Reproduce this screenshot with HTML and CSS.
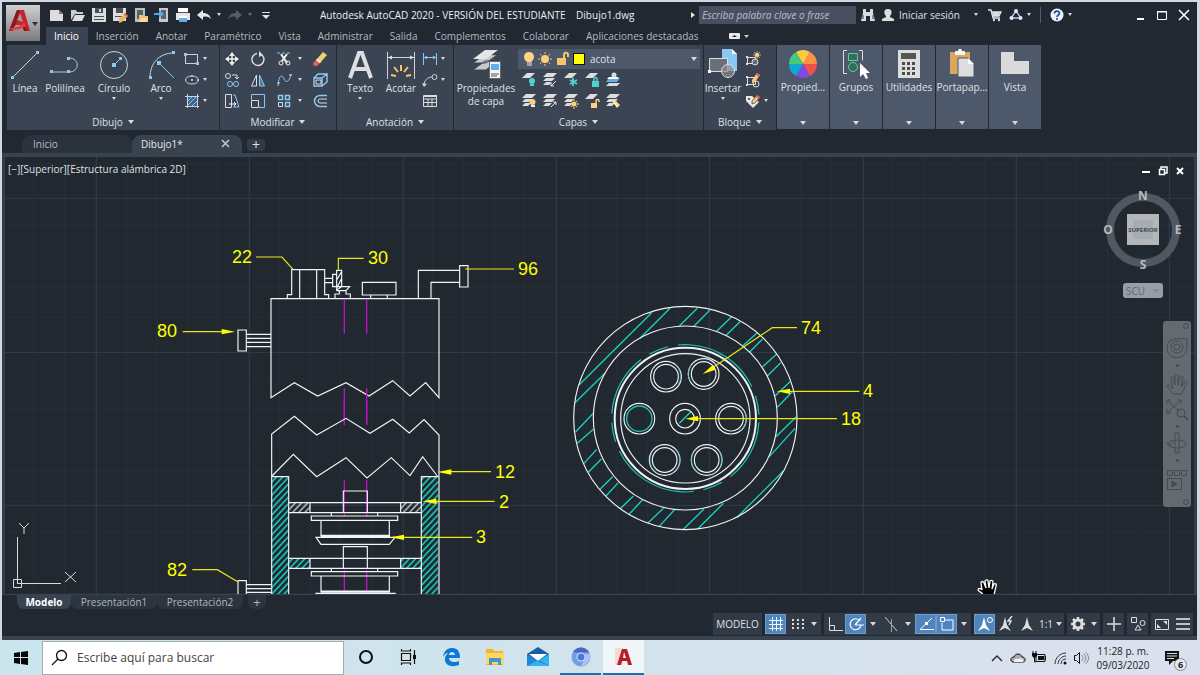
FILE: index.html
```html
<!DOCTYPE html>
<html lang="es">
<head>
<meta charset="utf-8">
<title>Autodesk AutoCAD 2020 - Dibujo1.dwg</title>
<link rel="stylesheet" href="styles.css">
</head>
<body>
<main class="app">
  <header class="top">
    <button class="logo" aria-label="Menú de la aplicación">
      <svg width="34" height="35" viewBox="0 0 34 35"><path d="M3 25 11 4h7l6 21h-6l-2-6H9l-2 6z" fill="#c8232b"/><path d="M11 14l3-7 3 9z" fill="#9b9da0"/><path d="M3 25 11 4l3 1-5 15zM16 19l4 3 1 3h-3z" fill="#8e151c"/><path d="M3 22c7 0 12-2 15-6l2 4c-5 3-9 4-14 4z" fill="#e33a40"/><path d="M26 16h6l-3 4z" fill="#333"/></svg>
    </button>
    <div class="bars">
      <div class="titlebar">
        <div class="quick">
          <button aria-label="Nuevo"><svg width="16" height="16"><path d="M1 3h9l4 4v7H1z" fill="#ddd"/><path d="M10 3v4h4z" fill="#777"/></svg></button>
          <button aria-label="Abrir"><svg width="16" height="16"><path d="M1 13V3h5l1 2h6v2H5z" fill="#ccc"/><path d="M5 8h10l-3 6H2z" fill="#ddd"/></svg></button>
          <button aria-label="Guardar"><svg width="16" height="16"><path d="M1 1h14v14H1z" fill="#ddd"/><path d="M4 1h8v5H4zM3 9h10v1H3zm0 3h10v1H3z" fill="#4a5059"/><path d="M8 2h2v3H8z" fill="#ddd"/></svg></button>
          <button aria-label="Guardar como"><svg width="16" height="16"><path d="M1 1h13v13H1z" fill="#ddd"/><path d="M4 1h7v5H4zM3 9h9v1H3z" fill="#4a5059"/><path d="m7 12 6-6 3 3-6 6-3 1z" fill="#f0b45c"/><path d="m12 7 1-1 3 3-1 1z" fill="#e2574c"/></svg></button>
          <button aria-label="Abrir desde la web"><svg width="16" height="16"><path d="M2 1h10v14H2z" fill="#b9bcc0"/><path d="M4 3h6v9H4z" fill="#5a6069"/><path d="M6 8h4l1 1h4v6H6z" fill="#edc36f"/><path d="M8 11h7l-2 4H6z" fill="#f8dc9a"/></svg></button>
          <button aria-label="Guardar en la web"><svg width="16" height="16"><path d="M5 1h9v14H5z" fill="#c6c9cd"/><path d="M7 3h5v9H7z" fill="#59606a"/><path d="M0 6h5V3l5 4-5 4V8H0z" fill="#56a8e8"/></svg></button>
          <button aria-label="Imprimir"><svg width="16" height="16"><path d="M3 1h10v4H3z" fill="#fff"/><path d="M1 6h14v7H1z" fill="#e4e4e4"/><path d="M3 5h10v1H3z" fill="#555"/><path d="M4 9h8v6H4z" fill="#5fb0ec"/><path d="M4 9h8v2H4z" fill="#fff"/></svg></button>
          <button aria-label="Deshacer"><svg width="16" height="16"><path d="M1 8l6-5v3c4 0 7 2 8 6-2-2-4-3-8-2v3z" fill="#e8e8e8"/></svg></button>
          <i class="caret"></i>
          <button aria-label="Rehacer"><svg width="16" height="16"><path d="M15 8 9 3v3C5 6 2 8 1 12c2-2 4-3 8-2v3z" fill="#565d68"/></svg></button>
          <i class="caret dim"></i>
          <button aria-label="Personalizar"><svg width="16" height="16"><path d="M4 5h8v1H4zm0 3h8l-4 4z" fill="#e0e0e0"/></svg></button>
        </div>
        <h1>Autodesk AutoCAD 2020 - VERSIÓN DEL ESTUDIANTE <span>Dibujo1.dwg</span></h1>
        <i class="expand"></i>
        <input class="help-search" type="search" aria-label="Buscar ayuda" placeholder="Escriba palabra clave o frase">
        <div class="account">
          <button aria-label="Buscar"><svg width="14" height="14"><path d="M2 1h3v3h4V1h3v4l2 8H9V8H5v5H0l2-8z" fill="#ddd"/><path d="M2 7v4M12 7v4" stroke="#333b47"/></svg></button>
          <button class="signin"><svg width="14" height="14"><path d="M7 1c5 0 4 5 2 7v1l4 2v2H1v-2l4-2V8C3 6 2 1 7 1z" fill="#ddd"/></svg><span>Iniciar sesión</span></button>
          <i class="caret"></i>
          <button aria-label="Tienda"><svg width="14" height="14"><path d="M0 2h3l2 8h7M3 4h10l-2 4H5" fill="none" stroke="#e4e4e4" stroke-width="1.3"/><path d="M4 4h8l-1 4H5z" fill="#ddd"/><circle cx="6" cy="12" r="1.2" fill="#ddd"/><circle cx="11" cy="12" r="1.2" fill="#ddd"/></svg></button>
          <button aria-label="Compartir"><svg width="14" height="14"><path d="M7 3 2 10h10z" fill="none" stroke="#b6c7e8" stroke-width="1.4"/><circle cx="7" cy="3" r="2" fill="#dfe8fa"/><circle cx="2.500" cy="10" r="2" fill="#dfe8fa"/><circle cx="11.500" cy="10" r="2" fill="#dfe8fa"/></svg></button>
          <i class="caret"></i>
          <span class="rule"></span>
          <button aria-label="Ayuda"><svg width="14" height="14"><circle cx="7" cy="7" r="6.500" fill="#eef3fb"/><path d="M4.500 5.500C4.500 2.500 9.500 2.500 9.500 5.200 9.500 7 7 7 7 9M7 10v2" fill="none" stroke="#2451a0" stroke-width="1.700"/></svg></button>
          <i class="caret"></i>
        </div>
        <div class="window-buttons">
          <button aria-label="Minimizar"><svg width="14" height="14"><path d="M4 11h7" stroke="#fff" stroke-width="2"/></svg></button>
          <button aria-label="Maximizar"><svg width="14" height="14"><path d="M2.500 3.500h9v8h-9zM2 4h10" fill="none" stroke="#fff"/></svg></button>
          <button aria-label="Cerrar"><svg width="14" height="14"><path d="m2 2 10 10M12 2 2 12" stroke="#fff" stroke-width="1.500"/></svg></button>
        </div>
      </div>
      <nav class="ribbon-tabs">
        <button class="on">Inicio</button><button>Inserción</button><button>Anotar</button><button>Paramétrico</button><button>Vista</button><button>Administrar</button><button>Salida</button><button>Complementos</button><button>Colaborar</button><button>Aplicaciones destacadas</button>
        <button class="collapse" aria-label="Minimizar la cinta"><svg width="22" height="10"><rect x="1" y="2" width="11" height="6" rx="1" fill="#e8e8e8"/><path d="m4 6 2.500-2L9 6z" fill="#222"/><path d="M16 4h5l-2.500 3z" fill="#ccc"/></svg></button>
      </nav>
    </div>
  </header>

  <section class="ribbon">
    <div class="panel draw">
      <div class="tools">
        <button class="big w36"><svg width="32" height="32"><path d="M3 29 29 3" stroke="#ccd3dc"/><path d="M2 27h3v3H2zM27 2h3v3h-3z" fill="#8cc8f4"/></svg>Línea</button>
        <button class="big w44"><svg width="32" height="32"><path d="M2 23h18c11 0 11-14 0-14" fill="none" stroke="#b8c4d2"/><path d="M1 21h3v3H1zM18 21h3v3h-3zM18 8h3v3h-3z" fill="#8cc8f4"/></svg>Polilínea</button>
        <button class="big w54"><svg width="32" height="32"><circle cx="16" cy="16" r="13.500" fill="none" stroke="#ccd3dc"/><path d="m16 16 6-6" stroke="#8cc8f4"/><path d="M14 14h4v4h-4zM21 8h3v3h-3z" fill="#8cc8f4"/></svg>Círculo<i class="caret"></i></button>
        <button class="big w40"><svg width="32" height="32"><path d="M5 29C5 14 14 4 29 4" fill="none" stroke="#ccd3dc"/><path d="M13 13 29 29" stroke="#8cc8f4"/><path d="M4 27h3v3H4zM27 2h3v3h-3zM12 12h4v4h-4z" fill="#8cc8f4"/></svg>Arco<i class="caret"></i></button>
        <div class="small two">
          <button aria-label="Rectángulo"><svg width="16" height="16"><path d="M1.500 3.500h12v9h-12z" fill="none" stroke="#ccd3dc"/><path d="M0 2h3v3H0zM12 11h3v3h-3z" fill="#8cc8f4"/></svg></button><i class="caret"></i>
          <button aria-label="Elipse"><svg width="16" height="16"><ellipse cx="8" cy="8" rx="6.500" ry="4" fill="none" stroke="#ccd3dc"/><path d="M7 7h2v2H7zM7 3h2v2H7zM13 7h2v2h-2z" fill="#8cc8f4"/></svg></button><i class="caret"></i>
          <button aria-label="Sombreado"><svg width="16" height="16"><path d="M4 4h9v9H4z" fill="#3d6487"/><path d="m4 8 4-4M4 12l8-8M8 13l5-5" stroke="#8cc8f4"/><path d="M1 3.500h14M1 13.500h14M3.500 1v14M13.500 1v14" stroke="#ccd3dc"/></svg></button><i class="caret"></i>
        </div>
      </div>
      <button class="caption">Dibujo <i class="caret wide"></i></button>
    </div>

    <div class="panel modify">
      <div class="tools">
        <div class="small five">
          <button aria-label="Desplazar"><svg width="16" height="16"><path d="M8 2v12M2 8h12" stroke="#eee" stroke-width="1.500"/><path d="m8 1 3 4H5zM8 15l3-4H5zM1 8l4-3v6zM15 8l-4-3v6z" fill="#eee"/></svg></button>
          <button aria-label="Girar"><svg width="16" height="16"><path d="M12 4a6 6 0 1 1-5-1.500" fill="none" stroke="#e0e0e0" stroke-width="1.400"/><path d="M9 0v6L13 4z" fill="#e0e0e0"/></svg></button>
          <button aria-label="Recortar"><svg width="16" height="16"><path d="M1 2h3M6 2h3M11 2h3" stroke="#8cc8f4"/><path d="m5 3 6 9M11 3 6 10" stroke="#eee" stroke-width="2"/><circle cx="5" cy="12" r="2" fill="none" stroke="#eee"/><circle cx="12" cy="12" r="2" fill="none" stroke="#eee"/></svg></button><i class="caret"></i>
          <button aria-label="Borrar"><svg width="16" height="16"><path d="m4 9 7-8 4 3-7 8z" fill="#f2cf75"/><path d="m1 12 3-3 4 3-3 3H2z" fill="#e85f58"/><path d="m4 9 1-1 4 3-1 1z" fill="#fff"/></svg></button>
          <button aria-label="Copiar"><svg width="16" height="16"><circle cx="4" cy="4" r="2.500" fill="none" stroke="#ddd"/><path d="M8 3h5v4M11 5l2 2 2-2" fill="none" stroke="#ddd"/><circle cx="6" cy="12" r="2.500" fill="none" stroke="#8cc8f4"/><circle cx="12" cy="12" r="2.500" fill="none" stroke="#8cc8f4"/></svg></button>
          <button aria-label="Simetría"><svg width="16" height="16"><path d="M6.500 3v11H1.500z" fill="none" stroke="#ddd"/><path d="M9.500 3v11h5z" fill="#4c789e" stroke="#8cc8f4"/></svg></button>
          <button aria-label="Empalme"><svg width="16" height="16"><path d="M2 14C3 0 7 4 8 7s5 5 7-5" fill="none" stroke="#8cc8f4"/><path d="M1 11h3M13 3h3" stroke="#ddd"/></svg></button><i class="caret"></i>
          <button aria-label="Descomponer"><svg width="16" height="16"><path d="M2 6h8v8H2zM2 6l4-4h9l-5 4M15 2v8l-5 4" fill="none" stroke="#8cc8f4" stroke-width="1.400"/><path d="M4 8h5v4H4z" fill="none" stroke="#ddd"/></svg></button>
          <button aria-label="Estirar"><svg width="16" height="16"><path d="M1.500 1.500h6v13h-6z" fill="none" stroke="#ddd"/><path d="M9 2h2l4 12H9" fill="none" stroke="#8cc8f4"/><path d="M5 11h7M10 9l2 2-2 2" fill="none" stroke="#fff"/></svg></button>
          <button aria-label="Escala"><svg width="16" height="16"><path d="M1.500 7V1.500h13v13H9" fill="none" stroke="#8cc8f4"/><path d="M1.500 7.500h7v7h-7z" fill="none" stroke="#ddd"/></svg></button>
          <button aria-label="Matriz"><svg width="16" height="16"><path d="M2.500 9.500h4v4h-4z" fill="none" stroke="#ddd"/><path d="M2.500 2.500h4v4h-4zM9.500 2.500h4v4h-4zM9.500 9.500h4v4h-4z" fill="none" stroke="#8cc8f4" stroke-width="1.500"/></svg></button><i class="caret"></i>
          <button aria-label="Desfase"><svg width="16" height="16"><path d="M15 2.500H8a5.500 5.500 0 0 0 0 11h7" fill="none" stroke="#8cc8f4" stroke-width="1.500"/><path d="M15 6H8a2 2 0 0 0 0 4h7" fill="none" stroke="#ddd"/></svg></button>
        </div>
      </div>
      <button class="caption">Modificar <i class="caret wide"></i></button>
    </div>

    <div class="panel annotate">
      <div class="tools">
        <button class="big w46"><svg width="32" height="32"><path d="M6 29 15 4h3l9 25M9 20h14" fill="none" stroke="#dedede" stroke-width="4"/></svg>Texto<i class="caret"></i></button>
        <button class="big w36"><svg width="32" height="32"><path d="M2.500 3v27M29.500 3v27" stroke="#ccd3dc"/><path d="M3 8.500h26" stroke="#ccd3dc"/><path d="m3 8.500 4-2v4zM29 8.500l-4-2v4z" fill="#ddd"/><path d="M16 16v6M9 18l4 5M23 18l-4 5M6 26l5 1M26 26l-5 1" stroke="#f5c56a" stroke-width="2"/></svg>Acotar</button>
        <div class="small two">
          <button aria-label="Cota lineal"><svg width="16" height="16"><path d="M1.500 2v12M14.500 2v12M2 6.500h12" stroke="#8cc8f4"/><path d="m2 6.500 3-2v4zM14 6.500l-3-2v4z" fill="#8cc8f4"/></svg></button><i class="caret"></i>
          <button aria-label="Directriz"><svg width="16" height="16"><path d="M2 14C2 8 6 5 10 5" fill="none" stroke="#ccd3dc"/><circle cx="12.500" cy="5" r="2.500" fill="none" stroke="#ccd3dc"/><path d="m0 11 2 4 3-3z" fill="#ccd3dc"/></svg></button><i class="caret"></i>
          <button aria-label="Tabla"><svg width="16" height="16"><path d="M1.500 2.500h13v11h-13zM1 6h14M1 9.500h14M6 6v8M10 6v8" fill="none" stroke="#ddd"/><path d="M2 2h13v2H2z" fill="#ddd"/></svg></button>
        </div>
      </div>
      <button class="caption">Anotación <i class="caret wide"></i></button>
    </div>

    <div class="panel layers">
      <div class="tools">
        <button class="big w64"><svg width="32" height="32"><path d="m3 21 12-9h12L16 21zM3 14l12-9 12 1-11 8z" fill="#c9c9c9" stroke="#3b4453"/><path d="m3 10 12-9h13L16 10z" fill="#e6e6e6"/><path d="M19.500 12.500h11v17h-11z" fill="#f4f4f4" stroke="#666"/><path d="M21 15h8v6h-8z" fill="#5fb0ec"/><path d="M21 25h8M21 27h6" stroke="#555"/></svg>Propiedades<br>de capa</button>
        <div class="layer-side">
          <div class="layer-box">
            <svg width="52" height="16"><path d="M10 11H6C0 6 4 1 8 1s8 5 2 10z" fill="#ffd582"/><path d="M6 12h5M6 14h5" stroke="#eee"/><circle cx="24" cy="8" r="4" fill="#ffd07a"/><path d="M24 1v2M24 13v2M17 8h2M29 8h2M19 3l1.500 1.500M27.500 11.500 29 13M19 13l1.500-1.500M27.500 4.500 29 3" stroke="#f3c474"/><path d="M36 7h9v7h-9z" fill="#f5c56a"/><path d="M43 7V4c0-3 4-3 4 0v2" fill="none" stroke="#f5c56a" stroke-width="2"/></svg>
            <span class="swatch"></span>
            <select aria-label="Capa"><option>acota</option></select><i class="caret wide"></i>
          </div>
          <div class="layer-tools">
            <button aria-label="Desactivar"><svg width="16" height="16"><path d="m1 6 5-5h8L9 6z" fill="#ddd"/><circle cx="11" cy="9" r="3" fill="#56cfd0"/><path d="M9 12h4v2H9z" fill="#56cfd0"/></svg></button>
            <button aria-label="Aislar"><svg width="16" height="16"><path d="m1 5 4-4h10l-4 4zM1 9l3-3h9l-3 3zM1 13l3-3h6l-3 3z" fill="#ddd"/><path d="m9 14 5-5M9 11v3h3" fill="none" stroke="#e5e5e5"/></svg></button>
            <button aria-label="Inutilizar"><svg width="16" height="16"><path d="m1 6 5-5h8L9 6z" fill="#ddd"/><path d="M10 6v8M7 8l7 4M14 8l-7 4" stroke="#56cfd0" stroke-width="1.800"/></svg></button>
            <button aria-label="Bloquear"><svg width="16" height="16"><path d="m1 6 5-5h8L9 6z" fill="#ddd"/><path d="M8 9h7v6H8z" fill="#56cfd0"/><path d="M10 9V7c0-2 3-2 3 0v2" fill="none" stroke="#56cfd0" stroke-width="1.500"/></svg></button>
            <button aria-label="Definir actual"><svg width="16" height="16"><path d="m1 14 3-3h11l-3 3z" fill="#ddd"/><path d="m1 10 3-4h11l-3 4z" fill="#62b0ea"/><path d="M4 5h10l-2 2H2z" fill="#fff"/><circle cx="9" cy="3" r="2.500" fill="#ddd"/></svg></button>
            <button aria-label="Activar"><svg width="16" height="16"><path d="m1 5 4-4h10l-4 4zM1 9l3-3h7l-3 3zM1 13l3-3h6l-3 3z" fill="#ddd"/><circle cx="11.500" cy="9" r="3" fill="#ffd07a"/><path d="M10 12h4v2h-4z" fill="#eee"/></svg></button>
            <button aria-label="Dejar de aislar"><svg width="16" height="16"><path d="m1 5 4-4h10l-4 4zM1 9l3-3h9l-3 3zM1 13l3-3h6l-3 3z" fill="#ddd"/><path d="m9 14 5-5M11 9h3v3" fill="none" stroke="#e5e5e5"/></svg></button>
            <button aria-label="Reutilizar"><svg width="16" height="16"><path d="m1 5 4-4h10l-4 4zM1 9l3-3h7l-3 3zM1 13l3-3h6l-3 3z" fill="#ddd"/><circle cx="11" cy="11" r="2.500" fill="#ffd07a"/><path d="M11 6v2M11 14v2M6 11h2M14 11h2M8 8l6 6M14 8l-6 6" stroke="#ffd07a"/></svg></button>
            <button aria-label="Desbloquear"><svg width="16" height="16"><path d="m1 6 5-5h8L9 6z" fill="#ddd"/><path d="M7 10h6v5H7z" fill="#ffd07a"/><path d="M12 10V8c0-2 3-2 3 0v1" fill="none" stroke="#ffd07a" stroke-width="1.500"/></svg></button>
            <button aria-label="Igualar capa"><svg width="16" height="16"><path d="m1 5 4-4h10l-4 4zM1 9l3-3h9l-3 3zM1 13l3-3h6l-3 3z" fill="#ddd"/><path d="m7 8 3-1 5 5-3 3z" fill="#f4dd90"/><path d="m8 9 5 5" stroke="#fff"/></svg></button>
          </div>
        </div>
      </div>
      <button class="caption">Capas <i class="caret wide"></i></button>
    </div>

    <div class="panel block">
      <div class="tools">
        <button class="big w38"><svg width="32" height="32"><path d="M15 0h10l5 5v17H15z" fill="#8cc8f4"/><path d="M25 0v5h5z" fill="#e8f5ff"/><path d="M2.500 9.500h18v13h-18z" fill="#697078" stroke="#ddd"/><circle cx="21" cy="22" r="6.500" fill="#8a8f96" fill-opacity=".7" stroke="#ddd"/><path d="M1 21h3v3H1z" fill="#fff"/></svg>Insertar<i class="caret"></i></button>
        <div class="small two">
          <button aria-label="Crear bloque"><svg width="16" height="16"><path d="M2.500 6.500h8v6h-8z" fill="none" stroke="#ddd"/><path d="M1 5h2v2H1zM1 12h2v2H1z" fill="#ddd"/><circle cx="10" cy="11" r="3" fill="#646c78" stroke="#ddd"/><circle cx="12" cy="4" r="2" fill="#ffdc73"/><path d="M12 0v8M8 4h8M9 1l6 6M15 1 9 7" stroke="#f3d683" stroke-width=".7"/></svg></button><i></i>
          <button aria-label="Editar bloque"><svg width="16" height="16"><path d="M2.500 5.500h8v7h-8z" fill="none" stroke="#ddd"/><path d="M1 4h2v2H1zM1 12h2v2H1z" fill="#ddd"/><circle cx="11" cy="12" r="3" fill="none" stroke="#ddd"/><path d="m7 8 5-7 3 2-5 7-3 1z" fill="#f4c979"/><path d="m12 1 3 2-1 2-3-2z" fill="#e2625a"/></svg></button><i></i>
          <button aria-label="Editar atributos"><svg width="16" height="16"><path d="M1 3h6l7 6-6 6-7-7z" fill="#e6e6e6"/><path d="m7 8 5-6 3 2-5 6-3 1z" fill="#f4c979" stroke="#3b4453" stroke-width=".7"/><path d="m12 2 3 2-1 2-3-2z" fill="#e2625a"/><circle cx="4" cy="6" r="1" fill="#333"/></svg></button><i class="caret"></i>
        </div>
      </div>
      <button class="caption">Bloque <i class="caret wide"></i></button>
    </div>

    <div class="folded">
      <button><svg width="32" height="32"><path d="M16 16 9 4a14 14 0 0 1 14 0z" fill="#ffc83d"/><path d="m16 16 7-12a14 14 0 0 1 7 12z" fill="#ff9147"/><path d="M16 16h14a14 14 0 0 1-7 12z" fill="#f1504d"/><path d="m16 16 7 12a14 14 0 0 1-14 0z" fill="#8049e8"/><path d="M16 16 9 28a14 14 0 0 1-7-12z" fill="#10a9cf"/><path d="M16 16H2A14 14 0 0 1 9 4z" fill="#47c97c"/></svg><span>Propied...</span><i class="caret wide"></i></button>
      <button><svg width="32" height="32"><path d="M7 2.500H3.500v23H7M19 2.500h3.500v10" fill="none" stroke="#ddd"/><path d="M8.500 5.500h9v7h-9z" fill="#386a60" stroke="#57d393"/><circle cx="13" cy="19" r="4.500" fill="#386a60" stroke="#57d393"/><path d="M20 15v14l3-3 3 5 2-1-2-5h4z" fill="#fff"/></svg><span>Grupos</span><i class="caret wide"></i></button>
      <button><svg width="32" height="32"><path d="M5 2h22v28H5z" fill="#ddd"/><path d="M8 5h15v6H8z" fill="#555"/><path d="M9 14h3v3H9zm5 0h3v3h-3zm5 0h3v3h-3zM9 19h3v3H9zm5 0h3v3h-3zm5 0h3v3h-3zM9 24h3v3H9zm5 0h3v3h-3zm5 0h3v3h-3z" fill="#4b4b4b"/></svg><span>Utilidades</span><i class="caret wide"></i></button>
      <button><svg width="32" height="32"><path d="M4 4h20v22H4z" fill="#d9a75e"/><path d="M9 3h3c0-3 4-3 4 0h3v4H9z" fill="#f4f4f4"/><path d="M12 10h10l6 6v13H12z" fill="#ddd" stroke="#4d586b"/><path d="M22 10v6h6z" fill="#fff"/></svg><span>Portapap...</span><i class="caret wide"></i></button>
      <button><svg width="32" height="32"><path d="M2 4h13v9h15v13H2z" fill="#dadada"/></svg><span>Vista</span><i class="caret wide"></i></button>
    </div>
  </section>

  <nav class="file-tabs">
    <button class="file">Inicio</button>
    <button class="file on"><span>Dibujo1*</span><svg width="10" height="10"><path d="m1 1 7 7M8 1 1 8" stroke="#c8c8c8" stroke-width="1.500"/></svg></button>
    <button class="add" aria-label="Nuevo dibujo">+</button>
  </nav>

  <section class="canvas">
    <svg class="drawing" width="100%" height="100%">
      <defs>
        <pattern id="minor" x="4" y="11" width="30.670" height="30.670" patternUnits="userSpaceOnUse" patternTransform="translate(91 30)"><path d="M0 0H31M0 0V31" stroke="#2a323c" fill="none"/></pattern>
        <pattern id="teal" width="4.500" height="4.500" patternUnits="userSpaceOnUse" patternTransform="rotate(43)"><path d="M1 0V5" stroke="#17d3c4" stroke-width="1.500"/></pattern>
        <pattern id="grey" width="4.500" height="4.500" patternUnits="userSpaceOnUse" patternTransform="rotate(43)"><path d="M1 0V5" stroke="#e0e0e0" stroke-width="1.200"/></pattern>
      </defs>
      <g transform="translate(-5 -157)">
        <rect x="5" y="157" width="100%" height="100%" fill="url(#minor)"/>
        <path d="M96.500 157V900M249.500 157V900M403.500 157V900M556.500 157V900M709.500 157V900M863.500 157V900M1016.500 157V900M1169.500 157V900M0 198.500H2000M0 352.500H2000M0 505.500H2000" stroke="#303946"/>

        <g transform="translate(150 235) scale(.33333)" fill="none" stroke="#f4f5f6" stroke-width="3.500">
          <path d="M363 488V191H867V488L827 443 780 483 728 437 657 483 588 443 503 483 433 443Z"/>
          <path d="M412 191V179H425V104H524V179H536V191M449 104V191M500 104V191M524 130H548M524 143H548M548 118H560V155H548ZM560 106H575V155L560 165ZM560 135 575 110M560 160 575 130M560 155H599L588 167H560M568 167V177H555V191M588 167V177H601V191M637 142H738V180H637ZM662 180V191M712 180V191M805 191V106H929M843 191V142H929M929 92H954V156H929ZM264 285H289V348H264ZM289 298H363M289 310H363M289 322H363M289 335H363"/>
          <path d="M583 193V296M650 193V296M583 460V570M650 460V570" stroke="#c010c8" stroke-width="4"/>
          <g stroke="#e8e81a"><path d="M318 66H396L429 103M565 104V70H641M945 102H1092M98 290H220"/><path d="m215 282 40 8-40 8z" fill="#ff0" stroke="none"/></g>
        </g>

        <path d="M272 477h16v260h-16zM421 477h17v260h-17zM289 558h21v10h-21zM401 558h20v10h-20z" fill="url(#teal)"/>
        <path d="M289 503h21v10h-21zM401 503h20v10h-20z" fill="url(#grey)"/>
        <g transform="translate(150 400) scale(.33333)" fill="none" stroke="#f4f5f6" stroke-width="3.500">
          <path d="M583 0V75M650 0V75M583 240V350M650 240V350M583 510V580M650 510V580" stroke="#c010c8" stroke-width="4"/>
          <path d="M365 800V102L433 49 500 105 588 55 660 100 728 58 778 99 822 59 867 105V800M366 228 430 163 500 230 588 173 651 234 724 173 780 227 818 170 862 228M365 230H416V800M865 230H814V800"/>
          <path d="M416 308H814M416 338H814M480 308V338M752 308V338M580 338V273H652V338M544 338V348M683 338V348M484 348H743V361H484ZM513 361V408M718 361V408M498 412H735L718 433H513ZM580 505V440H652V505M416 475H814M416 505H814M480 475V505M752 475V505M544 505V515M683 505V515M484 515H743V528H484ZM513 528V575M718 528V575M498 580H735L718 600H513Z"/>
          <path d="M512 408H720M512 575H720" stroke-width="7"/>
          <path d="M264 600V542H289V600M289 554H363M289 566H363M289 577H363"/>
          <g stroke="#e8e81a"><path d="M900 215H1023M850 304H1034M760 412H967M127 509H202L263 545"/><path d="m862 216 42-8v16zM817 304l42-8v16zM722 412l40-8v16z" fill="#ff0" stroke="none"/></g>
        </g>

        <g transform="translate(560 290) scale(.33333)" fill="none" stroke="#f0f2f3" stroke-width="3.500">
          <path stroke="#17d3c4" stroke-width="4" d="M275 68 57 285M330 55 240 145M135 250 45 338M412 55 358 108M450 60 400 110M515 80 470 124M540 95 497 137M590 130 548 168M607 148 568 187M650 192 608 230M662 218 622 258M690 275 645 318M697 305 652 352M709 380 648 440M705 415 628 500M670 543 530 683M490 640 413 717M432 657 368 720M343 660 297 710M310 655 263 700M247 630 208 672M220 618 180 657M175 578 138 618M158 560 120 598M124 507 85 547M110 478 72 520M100 418 52 460M100 370 47 425M358 400 392 366"/>
          <circle cx="376" cy="384" r="335"/><circle cx="376" cy="384" r="276"/>
          <circle cx="376" cy="385" r="221" stroke="#17c8ba" stroke-dasharray="190 30 60 30 270 30 58 28" transform="rotate(3 376 385)"/>
          <circle cx="376" cy="385" r="212" stroke-width="6"/><circle cx="376" cy="385" r="194"/>
          <circle cx="318" cy="260" r="46"/><circle cx="318" cy="260" r="37"/>
          <circle cx="431" cy="252" r="46"/><circle cx="431" cy="252" r="37"/>
          <circle cx="238" cy="386" r="46"/><circle cx="238" cy="386" r="38" stroke="#1fc4b4" stroke-width="4"/>
          <circle cx="513" cy="386" r="46"/><circle cx="513" cy="386" r="37"/>
          <circle cx="314" cy="510" r="46"/><circle cx="314" cy="510" r="37"/>
          <circle cx="440" cy="510" r="46"/><circle cx="440" cy="510" r="37"/>
          <circle cx="375" cy="386" r="46"/><circle cx="375" cy="386" r="28"/>
          <path stroke="#1fb9ac" stroke-width="2" d="M345 223a46 46 0 0 1 10 60M394 225a46 46 0 0 0-3 50M555 365a46 46 0 0 1-15 58M275 490a46 46 0 0 0 10 55M350 482a46 46 0 0 1 0 56M398 490a46 46 0 0 0 12 55M476 482a46 46 0 0 1 0 56"/>
          <g stroke="#e8e81a"><path d="M711 113H637L460 232M690 304H898M412 386H831"/><path d="m428 252 30-26 8 13zM650 304l40-8v16zM376 386l38-8v16z" fill="#ff0" stroke="none"/></g>
        </g>

        <g class="labels"><text x="232" y="263">22</text><text x="368" y="264">30</text><text x="518" y="275">96</text><text x="157" y="337">80</text><text x="495" y="478">12</text><text x="499" y="508">2</text><text x="476" y="543">3</text><text x="167" y="576">82</text><text x="801" y="334">74</text><text x="863" y="397">4</text><text x="841" y="425">18</text></g>
      </g>
    </svg>

    <p class="view-label">[−][Superior][Estructura alámbrica 2D]</p>
    <svg class="ucs" width="80" height="72"><path d="M12.500 58V16M17 62.500H56M8.500 58.500h8v8h-8zM12 62.500h5M12.500 58v5M14 2l5 5 5-5M19 7v6M60 51l11 10M71 51 60 61" fill="none" stroke="#d8dbde"/></svg>
    <div class="view-buttons">
      <button aria-label="Minimizar vista"><svg width="10" height="10"><path d="M1 6h8" stroke="#fff" stroke-width="2"/></svg></button>
      <button aria-label="Restaurar vista"><svg width="10" height="10"><path d="M1.500 3.500h5v5h-5zM3 3V1h6v6H7" fill="none" stroke="#fff" stroke-width="1.500"/></svg></button>
      <button aria-label="Cerrar vista"><svg width="10" height="10"><path d="m2 2 6 6M8 2 2 8" stroke="#fff" stroke-width="2"/></svg></button>
    </div>
    <div class="compass">
      <svg width="84" height="90" viewBox="0 0 84 90"><circle cx="42" cy="43" r="33" fill="none" stroke="#505861" stroke-width="8"/><path d="M26 27h32v31H26z" fill="#b4b6b8"/><path d="M32 33h20v19H32z" fill="#a6adb2"/><g class="points"><text x="42" y="13">N</text><text x="42" y="82">S</text><text x="7" y="47">O</text><text x="77" y="47">E</text></g><text class="face" x="42" y="45">SUPERIOR</text></svg>
      <button class="scu">SCU <i></i></button>
    </div>
    <div class="navbar">
      <svg width="28" height="186" fill="none" stroke="#454b52"><circle cx="23" cy="5" r="2.500"/><path d="M24 26c0 14-20 14-20 1 0-9 7-10 20-9z"/><circle cx="14" cy="26" r="6"/><circle cx="14" cy="26" r="3"/><path d="M13 44h3l-1.500 2zM13 105h3l-1.500 2zM13 139h3l-1.500 2z" fill="#454b52"/><path d="M10 73c-2-5-7-6-5-9 2-1 3 2 5 4L8 57c1-2 3-1 3 1l1 6V55c1-2 3-2 3 0v9l2-8c1-2 3-1 3 1l-2 9 3-5c2-1 3 0 2 2-2 4-2 7-5 10z"/><path d="m5 80 12 11M17 80 5 91M4 83v-4h4M14 79h4v4M4 88v4h4"/><circle cx="18" cy="92" r="4"/><path d="m21 95 4 4" stroke-width="2"/><ellipse cx="14" cy="123" rx="9" ry="4"/><path d="M12 112h4v20h-4zM4 121l3 4 3-4"/><path d="M4.500 149.500h5v5h-5zM11.500 149.500h5v5h-5zM18.500 149.500h5v5h-5zM4.500 157.500h14v11h-14z"/><path d="m9 160 5 3-5 3z" fill="#454b52"/><circle cx="23" cy="181" r="2.500"/></svg>
    </div>
    <svg class="hand" width="22" height="16"><path d="M6 17c-1-3-4-3-5-5 0-2 3-2 4 0L4 5c0-2 2-2 3 0l2 5-1-7c1-2 3-1 3 0l1 7 1-7c1-1 3-1 3 1l-1 7 2-5c1-1 3 0 2 2l-2 9z" fill="#000" stroke="#fff" stroke-width="1.300"/></svg>
  </section>

  <nav class="layout-tabs"><button class="on">Modelo</button><button>Presentación1</button><button>Presentación2</button><button class="plus" aria-label="Nueva presentación">+</button></nav>

  <footer class="status">
    <div class="group"><button class="model">MODELO</button></div>
    <div class="group"><button class="lit" aria-label="Rejilla"><svg width="16" height="16"><path d="M4.500 1v14M8.500 1v14M12.500 1v14M1 4.500h14M1 8.500h14M1 12.500h14" stroke="#eef5ff"/></svg></button><button aria-label="Forzar cursor"><svg width="16" height="16"><path d="M3 4h12M3 8h12M3 12h12" stroke="#ddd" stroke-width="2" stroke-dasharray="2 3"/></svg></button><i class="caret wide"></i></div>
    <div class="group"><button aria-label="Orto"><svg width="16" height="16"><path d="M2.500 1v13.500H16M2 9.500h5.500V15" fill="none" stroke="#ddd"/></svg></button><button class="lit" aria-label="Polar"><svg width="16" height="16"><path d="M12 5a5.500 5.500 0 1 0 1 4M7 9h9M7 9l6-7" fill="none" stroke="#fff" stroke-width="1.200"/></svg></button><i class="caret wide"></i><button aria-label="Isométrico"><svg width="16" height="16"><path d="m2 1 12 14" stroke="#ccc"/><path d="M8.500 3v13" stroke="#79b883"/></svg></button><i class="caret wide"></i><button class="lit" aria-label="Rastreo"><svg width="16" height="16"><path d="M14 2 2 13.500h14" fill="none" stroke="#fff"/><path d="M7 6h3v3H7z" fill="#fff"/></svg></button><button class="lit" aria-label="Referencia a objetos"><svg width="16" height="16"><path d="M6 4h8v10H3V7" fill="none" stroke="#fff"/><path d="M1.500 1.500h4v4h-4z" fill="none" stroke="#fff"/></svg></button><i class="caret wide"></i></div>
    <div class="group"><button class="lit" aria-label="Visibilidad de anotación"><svg width="18" height="16"><path d="m8 1 2 8 4 6-6-3-6 3 4-6z" fill="#fff"/><circle cx="14" cy="4" r="2.500" fill="none" stroke="#fff"/></svg></button><button aria-label="Escala automática"><svg width="18" height="16"><path d="m8 1 2 8 4 6-6-3-6 3 4-6z" fill="#ddd"/><path d="m15 0-4 5h3l-2 4" fill="none" stroke="#ddd" stroke-width="1.500"/></svg></button><button aria-label="Escala de anotación"><svg width="16" height="16"><path d="m8 1 2 8 4 6-6-3-6 3 4-6z" fill="#ddd"/></svg></button><button class="scale">1:1<i class="caret wide"></i></button></div>
    <div class="group gear"><button aria-label="Espacio de trabajo"><svg width="16" height="16"><circle cx="8" cy="8" r="4" fill="none" stroke="#ddd" stroke-width="3"/><path d="M8 1v3M8 12v3M1 8h3M12 8h3M3 3l2 2M11 11l2 2M13 3l-2 2M5 11l-2 2" stroke="#ddd" stroke-width="2.500"/></svg></button><i class="caret wide"></i></div>
    <div class="group"><button aria-label="Supervisor"><svg width="16" height="16"><path d="M8 1v14M1 8h14" stroke="#ddd" stroke-width="1.500"/></svg></button></div>
    <div class="group"><button aria-label="Aislar objetos"><svg width="16" height="16"><path d="M1.500 1.500h5v5h-5zM8 9l3 5H5z" fill="none" stroke="#ddd"/><circle cx="12.500" cy="7" r="2.500" fill="none" stroke="#ddd"/></svg></button></div>
    <div class="group"><button aria-label="Pantalla limpia"><svg width="16" height="16"><path d="M1.500 3.500h13v10h-13z" fill="none" stroke="#ddd"/><path d="M9 5h4v4zM3 8v4h4z" fill="#ddd"/></svg></button><button aria-label="Personalización"><svg width="16" height="16"><path d="M1 3h14M1 8h14M1 13h14" stroke="#eee" stroke-width="1.500"/></svg></button></div>
  </footer>
</main>

<footer class="taskbar">
  <button class="start" aria-label="Inicio"><svg width="14" height="14"><path d="m0 2 6-1v5H0zM7 1l7-1v6H7zM0 7h6v6l-6-1zM7 7h7v7l-7-1z" fill="#050505"/></svg></button>
  <label class="task-search"><svg width="18" height="18"><circle cx="10.500" cy="6.500" r="5" fill="none" stroke="#111" stroke-width="1.300"/><path d="m7 10-6 6" stroke="#111" stroke-width="1.300"/></svg><input type="text" aria-label="Buscar" placeholder="Escribe aquí para buscar"></label>
  <div class="task-apps">
    <button aria-label="Cortana"><svg width="22" height="22"><circle cx="11" cy="11" r="6" fill="none" stroke="#111" stroke-width="2"/></svg></button>
    <button aria-label="Vista de tareas"><svg width="22" height="22"><path d="M3.500 7.500h9v7h-9zM3.500 3v2h9V3M3.500 19v-2h9v2M16.500 4v14" fill="none" stroke="#111" stroke-width="1.200"/><path d="M15 9h3v4h-3z" fill="#111"/></svg></button>
    <button aria-label="Edge"><svg width="22" height="22"><path d="M2 11C3 4 7 2 11 2c6 0 8 4 8 10H8c0 4 6 5 10 3v4c-8 3-15 0-14-7 0-2 2-4 3-5-2 0-4 2-5 4zm6-2h6c0-4-6-4-6 0z" fill="#0c78d7"/></svg></button>
    <button aria-label="Explorador"><svg width="22" height="22"><path d="M2 3h7l1 2h9v14H2z" fill="#efb62e"/><path d="M2 7h18v11H2z" fill="#ffd664"/><path d="M5 12h12v7h-3v-3H8v3H5z" fill="#4596cf"/></svg></button>
    <button aria-label="Correo"><svg width="22" height="22"><path d="m0 8 11-7 11 7v12H0z" fill="#1261a5"/><path d="M2 8h18l-9 7z" fill="#fff"/><path d="m0 8 11 7-11 5z" fill="#1f86d0"/><path d="m22 8-11 7 11 5zM0 20l11-6 11 6z" fill="#31b3ed"/></svg></button>
    <button class="open" aria-label="Chromium"><svg width="22" height="22"><circle cx="11" cy="11" r="9.500" fill="#779de4"/><path d="M3 6a9.500 9.500 0 0 1 16 0l-8 1z" fill="#4569bd"/><path d="M20 8a9.500 9.500 0 0 1-9 12l4-7V8z" fill="#a7c2f4"/><circle cx="11" cy="11" r="4.500" fill="#dbe7fb"/><circle cx="11" cy="11" r="3.500" fill="#477bdb"/></svg></button>
    <button class="open current" aria-label="AutoCAD"><svg width="22" height="22"><path d="M2 2h8v17H2z" fill="#f5dada"/><path d="M4 19 9 3h5l5 16h-4l-1-4H9l-1 4zm6-7h3l-2-6z" fill="#b71f25"/></svg></button>
  </div>
  <div class="tray">
    <button aria-label="Iconos ocultos"><svg width="16" height="16"><path d="m3 11 5-5 5 5" fill="none" stroke="#222" stroke-width="1.300"/></svg></button>
    <button aria-label="OneDrive"><svg width="16" height="16"><path d="M3 12c-4-1-2-5 1-5 1-4 7-4 8 0 4 0 4 5 1 5z" fill="#aaa" stroke="#111"/><path d="M4 12c-1-3 2-4 4-3 2-2 7 0 5 3z" fill="#eee"/></svg></button>
    <button aria-label="Batería"><svg width="16" height="16"><path d="M5 4.500h9v7H5zM14.500 6v4" fill="none" stroke="#111"/><path d="M7 6h6v4H7zM1 3h5v3L4 8H3L1 6z" fill="#111"/><path d="M2 1v2M5 1v2M3.500 8v4H5" stroke="#111" fill="none"/></svg></button>
    <button aria-label="Red"><svg width="16" height="16"><path d="M3 14C3 8 8 3 14 3M6 14c0-4 4-8 8-8M9 14c0-3 2-5 5-5" fill="none" stroke="#333"/><circle cx="13" cy="13" r="1.500" fill="#111"/></svg></button>
    <button aria-label="Volumen"><svg width="16" height="16"><path d="M1.500 5.500h2l3-3v11l-3-3h-2z" fill="none" stroke="#111"/><path d="M8.500 5c2 2 2 4 0 6M10.500 3.500c3 3 3 6 0 9M12.500 2c4 4 4 8 0 12" fill="none" stroke="#888"/></svg></button>
    <time class="clock" datetime="2020-03-09T23:28">11:28 p. m.<br>09/03/2020</time>
    <button class="notify" aria-label="Notificaciones"><svg width="18" height="16"><path d="M1 1h14v10H9l-4 4v-4H1z" fill="#111"/><path d="M3 3.500h10M3 6h10M3 8.500h7" stroke="#ddd"/></svg><b>6</b></button>
  </div>
</footer>
</body>
</html>
```
FILE: styles.css
```css
* { box-sizing: border-box; }
body {
  margin: 0;
  min-height: 100vh;
  display: flex;
  flex-direction: column;
  background: #d3d8de;
  color: #dfe2e6;
  font: 10px/14px "Open Sans", "Noto Sans", sans-serif;
}
button, input, select { margin: 0; padding: 0; border: 0; background: none; color: inherit; font: inherit; }
button { display: flex; align-items: center; justify-content: center; white-space: nowrap; }
svg { flex: none; display: block; }
.caret { flex: none; width: 0; height: 0; border: 2px solid transparent; border-top: 3px solid #d5d8dc; border-bottom: 0; }
.caret.wide { border-width: 4px 3px 0; }
.caret.dim { border-top-color: #6b727c; }

.app { flex: 1; display: flex; flex-direction: column; margin: 2px 3px 0 2px; background: #222831; }

/* title bar and ribbon tabs */
.top { display: flex; padding-left: 4px; height: 43px; }
.logo { width: 34px; height: 36px; margin: 3px 6px 0 0; background: linear-gradient(#cfd0d1, #7a7c7f); }
.bars { flex: 1; display: flex; flex-direction: column; }
.titlebar { display: flex; align-items: center; height: 25px; }
.quick { display: flex; align-items: center; width: 274px; }
.quick button { width: 21px; height: 20px; }
.quick .caret { margin: 0 3px; }
h1 { margin: 0; font-size: 10px; font-weight: 400; width: 371px; white-space: nowrap; color: #eceef0; }
h1 span { margin-left: 8px; }
.expand { border: 3px solid transparent; border-left: 4px solid #e5e5e5; border-right: 0; }
.help-search { width: 157px; height: 18px; margin-left: 4px; padding-left: 3px; background: #48505f; font-style: italic; }
.help-search::placeholder { color: #b9bfc8; }
.account { display: flex; align-items: center; margin-left: 1px; }
.account button { width: 21px; height: 20px; }
.account .signin { width: auto; gap: 4px; padding-left: 3px; }
.signin + .caret { margin: 0 7px 0 14px; }
.rule { width: 1px; height: 16px; margin: 0 6px 0 9px; background: #555d69; }
.window-buttons { display: flex; margin-left: auto; padding-right: 2px; }
.window-buttons button { width: 22px; height: 20px; }
.ribbon-tabs { display: flex; height: 18px; }
.ribbon-tabs button { padding: 0 9px 0 8px; color: #b4b9c0; }
.ribbon-tabs .on { background: #3b4453; color: #fff; }
.ribbon-tabs .collapse { margin-left: 12px; }

/* ribbon */
.ribbon { display: flex; gap: 1px; padding-left: 5px; height: 85px; }
.panel { display: flex; flex-direction: column; background: #3b4453; }
.draw { width: 212px; }
.modify { width: 116px; }
.annotate { width: 116px; }
.layers { width: 249px; }
.block { width: 72px; }
.tools { flex: 1; display: flex; padding-top: 3px; }
.caption { height: 16px; gap: 5px; }
.big { flex-direction: column; justify-content: flex-start; height: 62px; padding-top: 1px; line-height: 13px; }
.big svg { margin-bottom: 1px; }
.big .caret { margin-top: 2px; }
.w36 { width: 36px; }
.w38 { width: 38px; }
.w40 { width: 40px; }
.w44 { width: 44px; }
.w46 { width: 46px; }
.w54 { width: 54px; }
.w64 { width: 64px; }
.small { display: grid; grid-auto-rows: 21px; align-items: center; align-content: start; }
.small.two { grid-template-columns: 22px 8px; }
.small.five { grid-template-columns: 24px 24px 24px 8px 24px; column-gap: 2px; }
.layer-side { width: 182px; padding-top: 1px; }
.layer-box { display: flex; align-items: center; height: 20px; background: #4d586b; padding: 0 3px; }
.swatch { width: 12px; height: 12px; border: 1px solid #111; background: #ff0; }
.layer-box select { flex: 1; appearance: none; padding-left: 5px; height: 18px; }
.layer-tools { display: grid; grid-template-columns: repeat(5, 21px); grid-auto-rows: 21px; }
.folded { display: flex; gap: 1px; }
.folded button { flex-direction: column; width: 52px; height: 84px; padding: 3px 0 4px; background: #4d586b; }
.folded span { margin-bottom: auto; line-height: 14px; }

/* drawing tabs */
.file-tabs { display: flex; align-items: flex-end; height: 27px; padding: 0 0 0 20px; border-bottom: 4px solid #39424f; }
.file { width: 110px; height: 18px; padding-left: 11px; justify-content: flex-start; background: #2a323e; color: #b9bec5; border-radius: 9px 9px 0 0; }
.file.on { justify-content: space-between; padding: 0 11px 0 9px; background: #39424f; color: #e6e8ea; }
.add { width: 18px; height: 12px; margin: 0 0 2px 5px; font-size: 14px; background: #323a46; border-radius: 3px; }

/* drawing area */
.canvas { flex: 1; position: relative; overflow: hidden; border-left: 3px solid #343d4b; border-right: 3px solid #343d4b; background: #212830; }
.drawing { position: absolute; inset: 0; }
.labels { font: 18px "Liberation Sans", Arial, sans-serif; fill: #ff0; }
.view-label { position: absolute; left: 3px; top: 5px; margin: 0; }
.ucs { position: absolute; left: 0; bottom: 1px; }
.view-buttons { position: absolute; right: 9px; top: 9px; display: flex; gap: 7px; }
.compass { position: absolute; right: 9px; top: 30px; display: flex; flex-direction: column; align-items: center; }
.points { font: bold 12px "Open Sans", sans-serif; text-anchor: middle; fill: #b8babc; }
.face { font: bold 6px "Open Sans", sans-serif; text-anchor: middle; fill: #40464d; }
.scu { width: 40px; height: 15px; margin-top: 6px; gap: 7px; border-radius: 3px; background: #989daa; color: #616875; }
.scu i { border: 4px solid transparent; border-top-color: #878d9a; border-bottom: 0; }
.navbar { position: absolute; right: 3px; top: 164px; width: 28px; border-radius: 3px; background: #656a70; }
.hand { position: absolute; left: 972px; bottom: 0; }

/* layout tabs and status bar */
.layout-tabs { display: flex; height: 17px; padding-left: 15px; border-top: 1px solid #39424f; }
.layout-tabs button { height: 14px; width: 86px; background: #2c3440; color: #b1b6be; border-radius: 0 0 7px 7px; }
.layout-tabs .on { width: 54px; color: #fff; font-weight: 700; background: #39424f; }
.layout-tabs .plus { width: 18px; margin-left: 5px; font-size: 13px; }
.status { display: flex; justify-content: flex-end; gap: 3px; height: 29px; padding: 2px 4px 5px 0; border-bottom: 4px solid #39424f; }
.group { display: flex; align-items: center; height: 22px; background: #323a46; }
.group button { width: 21px; height: 20px; }
.group .lit { background: #4f84bd; border: 1px solid #6c9ccf; }
.group .caret { margin: 0 4px; }
.group .model { width: 49px; }
.group .scale { width: 27px; gap: 3px; }
.group .scale .caret { margin: 0; }
.gear .caret { margin: 0 3px; }

/* taskbar */
.taskbar { display: flex; height: 35px; background: linear-gradient(90deg, #cae5ed, #d2e3ec 50%, #dbe0ee); color: #1c1c1c; }
.start { width: 42px; }
.task-search { display: flex; align-items: center; gap: 8px; width: 302px; margin-top: 1px; padding-left: 8px; border: 1px solid #a8adb0; background: #fff; }
.task-search input { flex: 1; min-width: 0; outline: 0; font-size: 12px; }
.task-search input::placeholder { color: #444; opacity: 1; }
.task-apps { display: flex; }
.task-apps button { width: 43px; border-bottom: 2px solid transparent; }
.task-apps .open { width: 41px; margin: 0 1px; border-bottom-color: #1273bb; }
.task-apps .current { background: #f0f5f8; }
.tray { display: flex; align-items: center; margin-left: auto; padding-right: 16px; }
.tray button { width: 21px; height: 30px; }
.clock { width: 64px; text-align: center; }
.tray .notify { position: relative; width: 22px; margin-left: 7px; }
.notify b { position: absolute; right: -3px; bottom: 2px; width: 13px; height: 13px; line-height: 12px; border: 1px solid #888; border-radius: 50%; background: #e5e8ef; text-align: center; font-size: 9px; }
```
